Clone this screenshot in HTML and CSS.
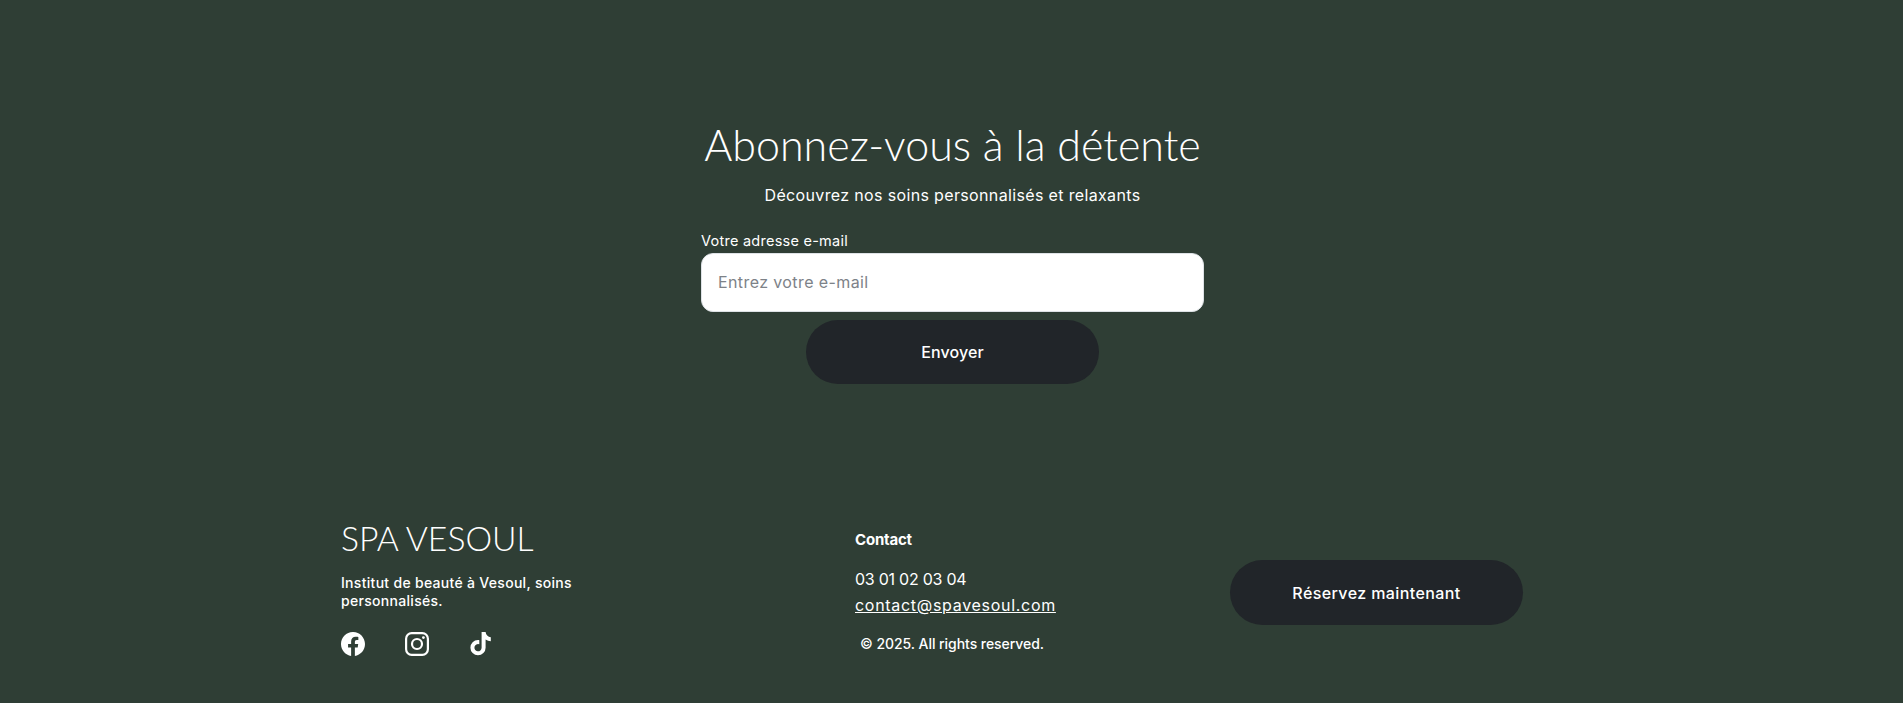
FILE: index.html
```html
<!DOCTYPE html>
<html lang="fr">
<head>
<meta charset="utf-8">
<title>Spa Vesoul</title>
<link rel="stylesheet" href="styles.css">
</head>
<body>
<main class="page">
  <section class="newsletter">
    <h2 class="news-title">Abonnez-vous à la détente</h2>
    <p class="news-sub">Découvrez nos soins personnalisés et relaxants</p>
    <form class="news-form">
      <label class="news-label" for="email">Votre adresse e-mail</label>
      <input class="news-input" id="email" type="email" placeholder="Entrez votre e-mail">
      <button class="pill pill-send" type="button">Envoyer</button>
    </form>
  </section>
  <footer class="footer">
    <div class="brand">
      <h3 class="brand-name">SPA VESOUL</h3>
      <p class="brand-desc">Institut de beauté à Vesoul, soins personnalisés.</p>
      <div class="socials">
        <svg class="icon" viewBox="0 0 16 16" aria-label="Facebook"><path d="M16 8.049c0-4.446-3.582-8.05-8-8.05C3.58 0-.002 3.603-.002 8.05c0 4.017 2.926 7.347 6.75 7.951v-5.625h-2.03V8.05H6.75V6.275c0-2.017 1.195-3.131 3.022-3.131.876 0 1.791.157 1.791.157v1.98h-1.009c-.993 0-1.303.621-1.303 1.258v1.51h2.218l-.354 2.326H9.25V16c3.824-.604 6.75-3.934 6.75-7.951"/></svg>
        <svg class="icon" viewBox="0 0 24 24" aria-label="Instagram"><rect class="ig-line" x="1.1" y="1.1" width="21.8" height="21.8" rx="5.6"/><circle class="ig-line" cx="12" cy="12" r="5"/><circle cx="18.4" cy="5.6" r="1.4"/></svg>
        <svg class="icon" viewBox="0 0 24 24" aria-label="TikTok"><path d="M12.6 0h4c.2 2.9 2.4 5 5.2 5.2v4a9.4 9.4 0 0 1-5.2-1.7v8.2a7.6 7.6 0 1 1-7.6-7.6c.5 0 .9 0 1.3.1v4.1a3.6 3.6 0 1 0 2.3 3.4z"/></svg>
      </div>
    </div>
    <div class="contact">
      <h4 class="contact-title">Contact</h4>
      <p class="contact-line">03 01 02 03 04</p>
      <a class="contact-line contact-mail" href="#">contact@spavesoul.com</a>
      <p class="copyright">© 2025. All rights reserved.</p>
    </div>
    <div class="cta">
      <button class="pill pill-cta" type="button">Réservez maintenant</button>
    </div>
  </footer>
</main>
</body>
</html>
```
FILE: styles.css
```css
* { box-sizing: border-box; }
html, body { margin: 0; }
body {
  background: #2f3e35;
  color: #fff;
  font-family: "Inter", "Liberation Sans", sans-serif;
  height: 703px;
  overflow: hidden;
}
.page { display: flex; flex-direction: column; padding-left: 2px; }

.newsletter {
  width: 503px;
  margin: 0 auto;
  padding-top: 120px;
  display: flex;
  flex-direction: column;
  align-items: center;
}
.news-title {
  margin: 0;
  font-family: "Lato", sans-serif;
  font-weight: 300;
  font-size: 43px;
  line-height: 50px;
  white-space: nowrap;
}
.news-sub {
  margin: 13px 0 0;
  font-size: 16px;
  letter-spacing: .35px;
  line-height: 24px;
  white-space: nowrap;
}
.news-form {
  width: 100%;
  margin-top: 25px;
  display: flex;
  flex-direction: column;
  align-items: center;
}
.news-label {
  align-self: flex-start;
  margin-bottom: 4px;
  font-size: 14.5px;
  letter-spacing: .25px;
  line-height: 17px;
}
.news-input {
  width: 100%;
  height: 59px;
  padding: 0 16px 2px;
  border: 1px solid #dee2e6;
  border-radius: 12px;
  background: #fff;
  font-family: inherit;
  font-size: 16px;
  letter-spacing: .4px;
  color: #212529;
}
.news-input::placeholder { color: #7d8288; opacity: 1; }

.pill {
  width: 293px;
  border: 0;
  background: #212529;
  color: #fff;
  font-family: inherit;
  font-size: 16px;
  font-weight: 500;
  letter-spacing: .1px;
}
.pill-send { margin-top: 8px; height: 64px; border-radius: 32px; }
.pill-cta { height: 65px; border-radius: 33px; letter-spacing: .4px; }

.footer {
  margin-top: 134px;
  padding-left: 339px;
  display: grid;
  grid-template-columns: 514px 375px 293px;
}
.brand-name {
  margin: 0;
  font-family: "Lato", sans-serif;
  font-weight: 300;
  font-size: 33.7px;
  line-height: 40px;
  white-space: nowrap;
}
.brand-desc {
  margin: 16px 0 0;
  width: 240px;
  font-size: 14px;
  letter-spacing: .3px;
  line-height: 18px;
  font-weight: 500;
}
.socials {
  margin-top: 22px;
  display: flex;
  gap: 40px;
}
.icon { width: 24px; height: 24px; fill: #fff; display: block; }
.ig-line { fill: none; stroke: #fff; stroke-width: 2.2; }

.contact { display: flex; flex-direction: column; align-items: flex-start; padding-top: 12px; }
.contact-title {
  margin: 0;
  font-size: 15px;
  line-height: 20px;
  font-weight: 700;
  letter-spacing: -.2px;
}
.contact-line {
  margin: 0;
  font-size: 16px;
  letter-spacing: -.25px;
  line-height: 26px;
  color: #fff;
}
.contact-title + .contact-line { margin-top: 16px; }
.contact-mail { text-decoration: underline; letter-spacing: .7px; }
.copyright {
  margin: 16px 0 0 5px;
  font-size: 14px;
  letter-spacing: -.05px;
  line-height: 20px;
  font-weight: 500;
}
.cta { display: flex; align-items: center; padding-top: 11px; }
```
